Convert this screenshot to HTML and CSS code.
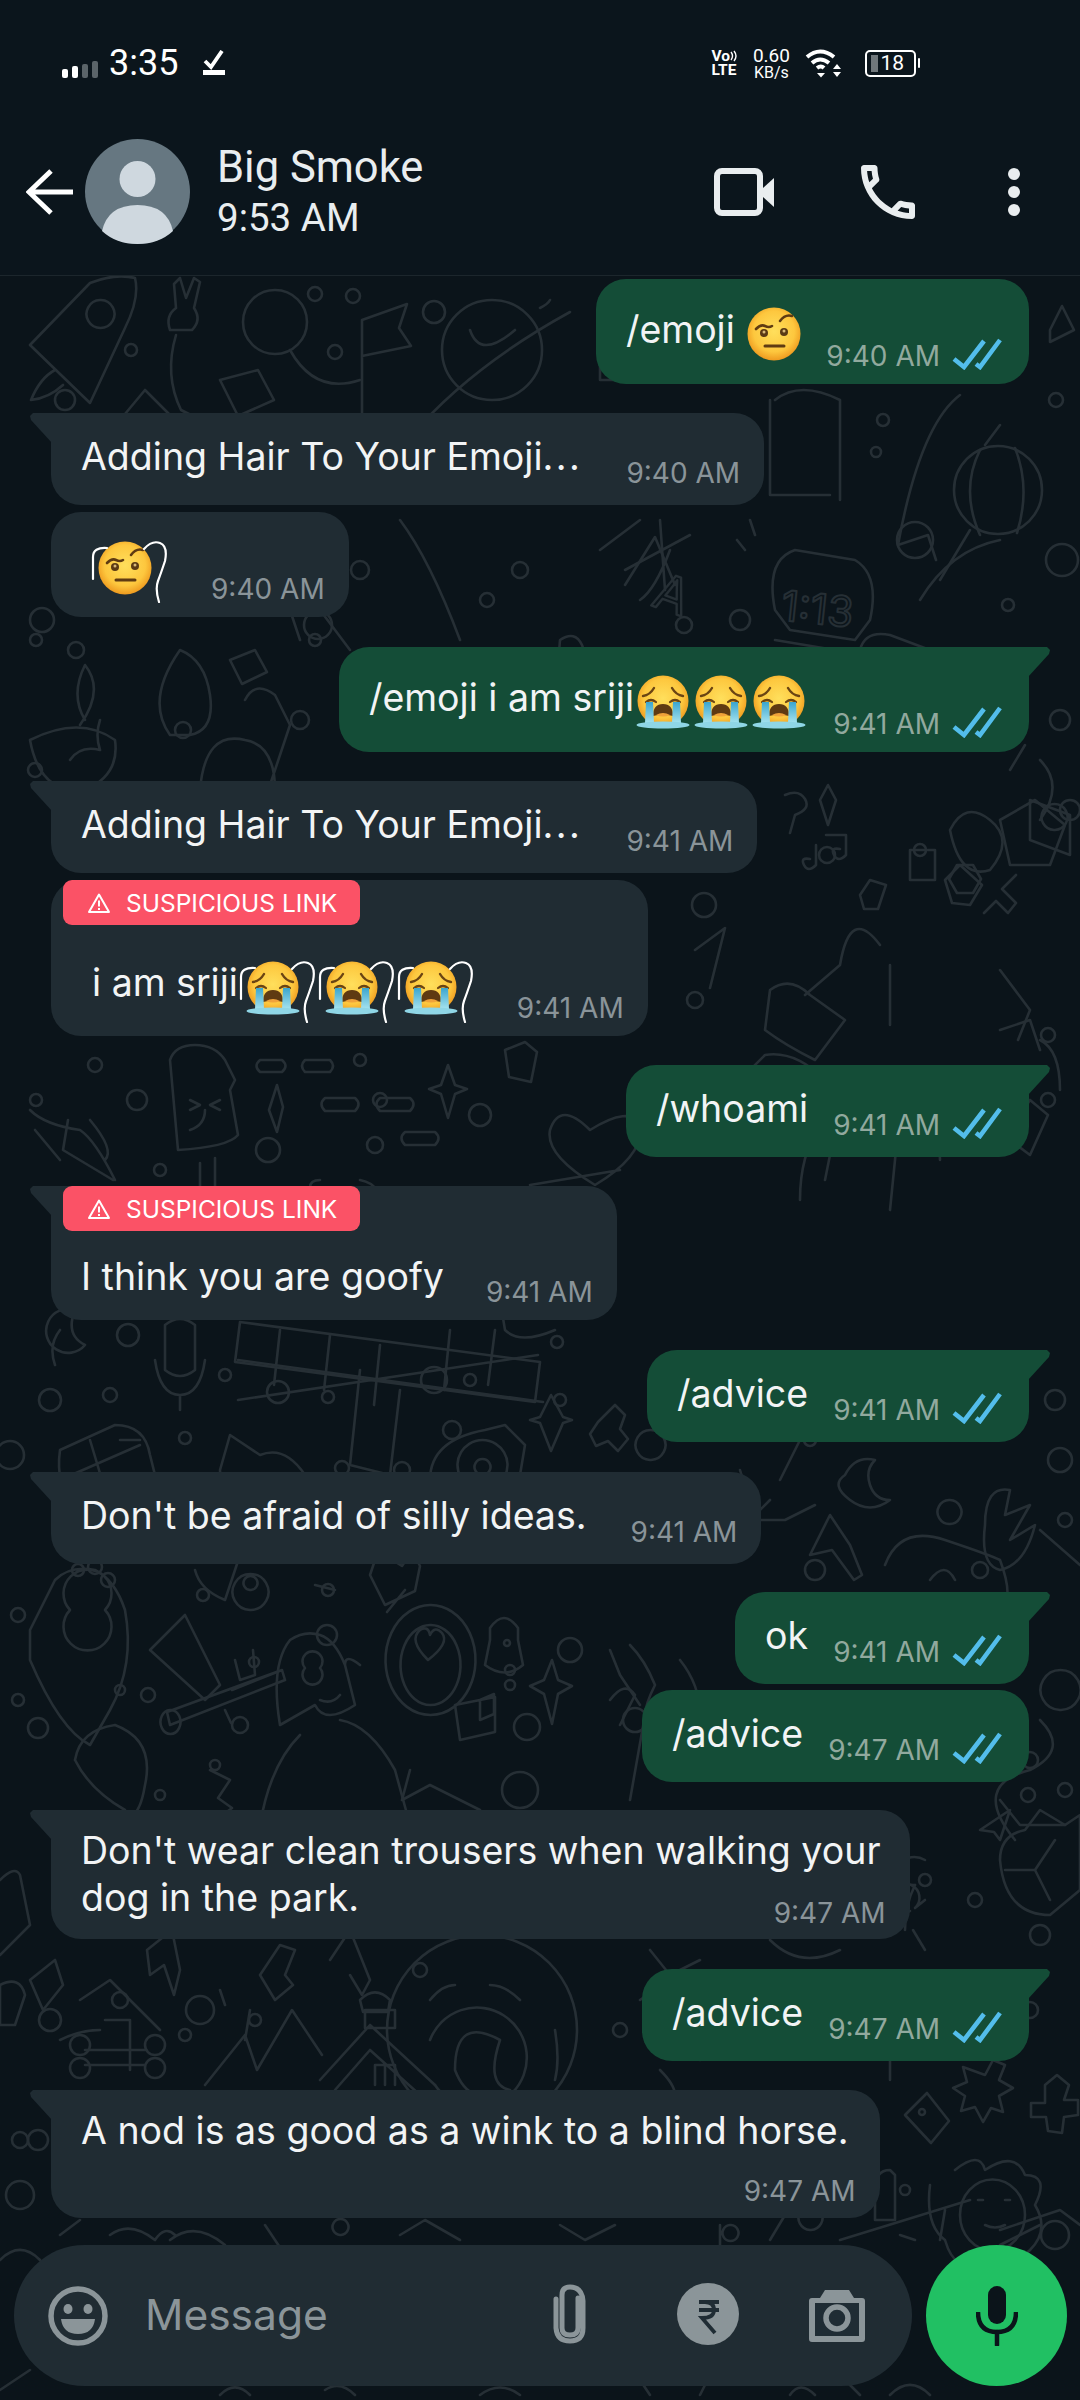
FILE: index.html
```html
<!DOCTYPE html>
<html lang="en">
<head>
<meta charset="utf-8">
<title>Big Smoke</title>
<link rel="stylesheet" href="styles.css">
</head>
<body>
<svg class="defs" width="0" height="0" aria-hidden="true">
  <defs>
    <radialGradient id="face" cx="50%" cy="45%" r="55%">
      <stop offset="0" stop-color="#ffdf5c"/><stop offset=".7" stop-color="#fdc73e"/><stop offset="1" stop-color="#ee9a1f"/>
    </radialGradient>
    <linearGradient id="tear" x1="0" y1="0" x2="0" y2="1">
      <stop offset="0" stop-color="#3aa5cf"/><stop offset="1" stop-color="#a6e3ee"/>
    </linearGradient>
    <symbol id="brow" viewBox="0 0 54 54">
      <circle cx="27" cy="27" r="26.5" fill="url(#face)"/>
      <path d="M9 22q5-5 9-3t7 0" fill="none" stroke="#5f3b12" stroke-width="2.6" stroke-linecap="round"/>
      <path d="M33 14q5-7 12-5" fill="none" stroke="#5f3b12" stroke-width="2.6" stroke-linecap="round"/>
      <circle cx="17" cy="26" r="4" fill="#5b3a14"/><circle cx="17" cy="25" r="1.5" fill="#d8b878"/>
      <circle cx="37" cy="25" r="4" fill="#5b3a14"/><circle cx="37" cy="24" r="1.5" fill="#d8b878"/>
      <path d="M18 39h19" stroke="#5f3b12" stroke-width="3" stroke-linecap="round"/>
    </symbol>
    <symbol id="cry" viewBox="0 0 54 54">
      <circle cx="27" cy="26" r="25.5" fill="url(#face)"/>
      <path d="M7 21q7-1 11-8M47 21q-7-1-11-8" fill="none" stroke="#6b4413" stroke-width="2.4" stroke-linecap="round"/>
      <path d="M10 27q5-4 10 0M34 27q5-4 10 0" fill="none" stroke="#6b4413" stroke-width="2.2" stroke-linecap="round"/>
      <path d="M17 41q0-12 10-12t10 12q-10-3-20 0z" fill="#5f3a12"/>
      <path d="M20 40q7-4 14 0q-7 3-14 0z" fill="#f0a23a"/>
      <path d="M10 27h7l1 21h-9zM37 27h7l1 21h-9z" fill="url(#tear)"/>
      <ellipse cx="27" cy="50" rx="26.5" ry="3.6" fill="#8fd6e6"/>
    </symbol>
    <symbol id="hair" viewBox="0 0 80 66">
      <path d="M3 42V20q0-10 14-9" fill="none" stroke="#fff" stroke-width="2.2" stroke-linecap="round"/>
      <path d="M54 12q8-9 16-6t5 18q-4 12-7 20t1 21" fill="none" stroke="#fff" stroke-width="2.2" stroke-linecap="round"/>
    </symbol>
    <symbol id="ticks" viewBox="0 0 50 32">
      <path d="M2 21l10 8L32 3M24 26l4 3L48 2" fill="none" stroke="#53bdeb" stroke-width="4.6"/>
    </symbol>
    <symbol id="warn" viewBox="0 0 24 22">
      <path d="M12 2.500L22 20H2z" fill="none" stroke="#fff" stroke-width="2" stroke-linejoin="round"/>
      <path d="M12 8.500v6M12 16v2" stroke="#fff" stroke-width="2"/>
    </symbol>
  </defs>
</svg>

<div class="screen">
  <header class="header">
    <div class="status">
      <svg class="bars" viewBox="0 0 36 17"><rect x="0" y="8" width="6" height="9" rx="2" fill="#fff"/><rect x="10" y="5" width="6" height="12" rx="2" fill="#fff"/><rect x="20" y="3" width="6" height="14" rx="2" fill="#5b6469"/><rect x="30" y="0" width="6" height="17" rx="2" fill="#5b6469"/></svg>
      <span class="clock">3:35</span>
      <svg class="dl" viewBox="0 0 22 26"><path d="M2 11l6 6L19 1" fill="none" stroke="#fff" stroke-width="3.800"/><rect x="0" y="20" width="22" height="5" fill="#fff"/></svg>
      <div class="net">
        <div class="volte"><span class="vo">Vo<svg class="arcs" viewBox="0 0 8 12"><path d="M1 2q3 4 0 8M4 1q4 5 0 10" fill="none" stroke="#fff" stroke-width="1.4"/></svg></span><span>LTE</span></div>
        <div class="speed"><span class="sp1">0.60</span><span class="sp2">KB/s</span></div>
        <svg class="wifi" viewBox="0 0 36 30"><path d="M1 9q13-11 27 0M6 15q8-7 17 0M11 20q4-3 7 0" fill="none" stroke="#fff" stroke-width="4"/><path d="M11 25h8l-4 4.500z" fill="#fff"/><path d="M31 16l4 5h-8zM27 24h8l-4 5z" fill="#fff"/></svg>
        <div class="batt"><i class="level"></i><span>18</span></div>
      </div>
    </div>
    <div class="appbar">
      <svg class="back" viewBox="0 0 47 46"><path d="M25 2L3 23l22 21M3 23h44" fill="none" stroke="#fff" stroke-width="5"/></svg>
      <svg class="avatar" viewBox="0 0 105 105"><circle cx="52.500" cy="52.500" r="52.500" fill="#667781"/><ellipse cx="52.500" cy="40" rx="18" ry="18" fill="#cfd8df"/><path d="M17 92q6-26 35.500-26T88 92q-14 13-35.500 13T17 92z" fill="#cfd8df"/></svg>
      <div class="who">
        <div class="name">Big Smoke</div>
        <div class="seen">9:53 AM</div>
      </div>
      <svg class="video" viewBox="0 0 60 48"><rect x="3" y="3" width="43" height="42" rx="5" fill="none" stroke="#e9edef" stroke-width="6"/><path d="M49 20l11-10v29L49 29z" fill="#e9edef"/></svg>
      <svg class="phone" viewBox="0 0 24 24"><path fill="#e9edef" d="M6.540 5c.06.89.21 1.760.45 2.590l-1.200 1.200c-.41-1.200-.67-2.470-.76-3.790h1.510m9.860 12.020c.85.24 1.720.39 2.600.45v1.490c-1.320-.09-2.590-.35-3.800-.75l1.200-1.190M7.500 3H4c-.55 0-1 .45-1 1 0 9.390 7.610 17 17 17 .55 0 1-.45 1-1v-3.490c0-.55-.45-1-1-1-1.240 0-2.450-.2-3.570-.57-.1-.04-.21-.05-.31-.05-.26 0-.51.1-.71.29l-2.200 2.200c-2.830-1.450-5.150-3.760-6.590-6.590l2.200-2.200c.28-.28.36-.67.25-1.020C8.700 6.450 8.500 5.250 8.500 4c0-.55-.45-1-1-1z"/></svg>
      <svg class="dots" viewBox="0 0 16 48"><circle cx="8" cy="6" r="6" fill="#e9edef"/><circle cx="8" cy="24" r="6" fill="#e9edef"/><circle cx="8" cy="42" r="6" fill="#e9edef"/></svg>
    </div>
  </header>

  <main class="chat">
    <svg class="doodles" viewBox="0 276 1080 2124" aria-hidden="true">
      <g fill="none" stroke="#262f35" stroke-width="2.600" stroke-linecap="round" stroke-linejoin="round">
        <path d="M30 345l60-62q25-10 45-5 5 20-10 50l-35 75zM100 300a14 14 0 1 0 1 0zM55 370q-15 8-24 30 18-2 32-15"/>
        <path d="M170 330q-5-14 6-22l-2-24 6-6 6 20 8-20 6 4-6 26q8 12-2 22zM176 335q-12 40 5 75q35 20 60 5"/>
        <circle cx="275" cy="322" r="32"/><path d="M290 350q25 45 70 30"/>
        <circle cx="315" cy="294" r="7"/><circle cx="353" cy="296" r="7"/><circle cx="335" cy="352" r="7"/><circle cx="434" cy="312" r="11"/><circle cx="131" cy="350" r="6"/>
        <path d="M362 420V320l45-16-8 24 12 18-49 10"/>
        <circle cx="492" cy="350" r="50"/><path d="M570 312q-100 55-160 125M550 300q-2 4-10 8M470 330q10 30 45 0"/>
        <path d="M220 380l38-10 16 30-36 16zM120 420l25-30 40 40"/><circle cx="65" cy="400" r="10"/>
        <path d="M1050 330l12-24 12 24 -24 12z"/><path d="M1000 540q-50 10-80 60M960 395q-40 30-62 150l30-10 8 25"/><circle cx="883" cy="420" r="6"/>
        <circle cx="998" cy="490" r="44"/><path d="M980 450q-20 40 0 85M1015 448q16 40 2 85M985 445l15-20M970 530l-30 50"/><circle cx="1056" cy="400" r="7"/>
        <path d="M600 550l40-30M625 585l30-48 20 48M770 400v95h60"/><path d="M640 360h-40v20h40zM775 400q25-20 65 0v100"/>
        <circle cx="876" cy="452" r="5"/><circle cx="915" cy="540" r="18"/><circle cx="1062" cy="560" r="16"/><circle cx="1008" cy="605" r="6"/>
        <path d="M775 610q-10-50 20-60l60 10q25 15 15 60l-15 20-65-10zM775 640l60 10M745 550l-8-10M755 535l-5-15"/>
        <text x="780" y="620" font-family="Inter, sans-serif" font-size="42" transform="rotate(6 780 620)" fill="none" stroke="#262f35" stroke-width="2">1:13</text>
        <text x="650" y="605" font-family="Inter, sans-serif" font-size="50" fill="none" stroke="#262f35" stroke-width="2.400" transform="rotate(20 650 605)">A</text>
        <path d="M625 570l65-35M660 520l5 70M640 600q15-10 30-50"/>
        <path d="M560 640q15-10 22 5t-2 25q-15 8-22-5zM400 520q30 40 60 120M350 650l-45-60M300 640l-20-60"/>
        <circle cx="520" cy="570" r="8"/><circle cx="487" cy="600" r="7"/><circle cx="360" cy="570" r="9"/>
        <circle cx="42" cy="620" r="12"/><circle cx="36" cy="640" r="6"/><circle cx="76" cy="650" r="8"/><circle cx="318" cy="625" r="14"/><circle cx="315" cy="640" r="6"/><circle cx="610" cy="670" r="18"/><circle cx="684" cy="625" r="8"/><circle cx="740" cy="620" r="10"/>
        <path d="M180 650q25 10 30 45t-20 40h-20q-25-35 10-85zM230 660l25-10 12 22-25 12z"/>
        <path d="M100 720q-5 15 0 30q-20-5-30 10M30 740q50-25 85 0q5 35-30 50q-45 5-55-50zM85 720q-15-25 0-55 20 25-5 60"/>
        <circle cx="35" cy="770" r="7"/><circle cx="183" cy="730" r="8"/><circle cx="300" cy="720" r="9"/>
        <path d="M245 700q10-20 30-5l15 30 -20 60M200 790q5-60 45-50 30 5 30 50"/>
        <path d="M860 650q5-20 30-15l40 15-15 45-50-5zM915 680l-10 30M860 720l-40-20"/>
        <path d="M1000 820l35-20 30 25-15 40h-40zM1040 760q25 25 0 60M1010 770l15-25"/>
        <path d="M785 795q14-6 20 4t-10 16l-5 18M826 835h20v20q-8 8-12 0t6-6M816 845v20q-8 8-12 0t6-6M957 865l16 0 8 14-8 14h-16l-8-14zM1016 875l-14 14 14 14-8 10-12-12-12 12M1054 830a13 13 0 1 1 1 0M1030 800l40 15v40l-40-15z"/>
        <path d="M820 800l8-15 8 15 -8 25zM910 850h25v30h-25zM950 830q15-30 40-10t0 50q-30 10-40-40z"/>
        <circle cx="827" cy="855" r="8"/><circle cx="920" cy="850" r="6"/><circle cx="1070" cy="810" r="10"/><circle cx="1060" cy="720" r="10"/>
        <path d="M860 895l10-15 16 5-8 24-14 0zM945 880l15-15 22 20-12 20-18-2zM880 945q-30-40-40 20l-35 30M695 950l30-22 -15 60"/>
        <path d="M770 990q20-15 40 5l35 25-30 40q-30-15-50-30zM890 1025v-60M1000 970l30 40-12 30"/><circle cx="704" cy="905" r="12"/><circle cx="695" cy="1000" r="8"/>
        <path d="M720 1100l45-45q30-5 60 25l45 60M800 1200q0-90 80-120q60 30 60 80M845 1080l-20 100M900 1110l-10 100"/>
        <path d="M1000 1030l30-10 10 30M1040 1040q20 10 20 50M1030 1100q-20 30-20 40l20 15 18-40z"/><circle cx="1048" cy="1035" r="7"/><circle cx="1048" cy="1100" r="7"/>
        <circle cx="95" cy="1065" r="7"/><circle cx="137" cy="1100" r="10"/><circle cx="36" cy="1100" r="6"/>
        <path d="M170 1060q5-15 25-15 20 0 30 15l10 20-5 10 8 45q-10 12-60 15zM200 1163v30q15 10 15-5v-30M190 1130q15-5 15-20M190 1100l10 5-10 5M220 1100l-10 5 10 5"/>
        <path d="M30 1110q15 15 50 20 15 10 35 50M68 1120l-5 30 50 30M90 1120q25 30 15 40M35 1130l25 30"/>
        <path d="M260 1060h22q7 6 0 12h-22q-7-6 0-12zM305 1060h25q6 6 0 12h-25q-6-6 0-12zM325 1098h30q7 6 0 13h-30q-7-7 0-13zM380 1098h30q7 6 0 13h-30q-7-7 0-13zM405 1132h30q7 6 0 13h-30q-7-7 0-13z"/>
        <path d="M277 1085l6 22 -6 25-8-22zM448 1065l7 20 12 4-12 5-7 24-7-24-12-5 12-4z"/><circle cx="360" cy="1060" r="6"/><circle cx="380" cy="1100" r="7"/><circle cx="480" cy="1115" r="11"/><circle cx="375" cy="1145" r="8"/><circle cx="268" cy="1150" r="12"/><circle cx="160" cy="1170" r="6"/>
        <path d="M505 1050l20-8 12 10-6 30-22-5zM590 1130q-30-30-40 0-5 25 45 55 50-30 45-60-10-20-50 5zM620 1170l-90 15"/>
        <path d="M520 1205l-30 25M360 1180q25 5 15 30M320 1180q-20 0 0 30"/>
        <path d="M238 1400l300 -45M238 1360l305 42M280 1330l-6 55M330 1335l-6 55M380 1345l-6 60M450 1330l-6 60M495 1330l-7 55M360 1370l-10 95 40 10 10-85"/>
        <path d="M240 1322l300 40 -5 40-300-40zM60 1330q-12 15-5 35M85 1345a22 22 0 1 1-10-35q-10 25 10 35z"/><circle cx="128" cy="1335" r="11"/>
        <path d="M165 1340v30q15 12 30 0v-45q-15-12-30 0zM155 1360q5 35 25 35t25-35M180 1395v15"/><circle cx="225" cy="1375" r="6"/><circle cx="110" cy="1395" r="7"/><circle cx="50" cy="1400" r="11"/><circle cx="278" cy="1392" r="11"/><circle cx="328" cy="1397" r="6"/>
        <path d="M560 1315a25 25 0 1 1 1 0zM500 1300l5 30q15 15 50 0"/>
        <circle cx="434" cy="1380" r="13"/><circle cx="470" cy="1380" r="6"/><circle cx="557" cy="1342" r="6"/><circle cx="560" cy="1400" r="6"/>
        <path d="M60 1450l55-25q30 0 35 30l10 40-85 20q-20-30-15-65zM60 1480l80-35M90 1440l15 50M120 1440h20"/><circle cx="185" cy="1438" r="6"/><circle cx="10" cy="1455" r="14"/>
        <path d="M220 1470l10-35 30 20q25-10 45 20l15 50h-90q-10-30-10-55zM265 1475l15 10M230 1490l10 20"/>
        <path d="M430 1480q0-40 55-50l20-5 20 20 -10 60h-80zM482 1490a25 25 0 1 1 1 0zM482 1475a8 8 0 1 1 1 0z"/><circle cx="402" cy="1470" r="8"/><circle cx="342" cy="1468" r="7"/><circle cx="452" cy="1430" r="9"/>
        <path d="M551 1395l12 22 9 3-9 3-12 28-11-28-10-3 10-3zM605 1415l10-10 10 10 -5 14 8 10-10 12-10-10-12 5-6-12 8-12z"/>
        <path d="M650 1460a15 15 0 1 1 1 0M740 1470l15 50h30l30-15M770 1500l-15 15M800 1440l-20 40"/>
        <circle cx="1055" cy="1400" r="10"/><circle cx="1060" cy="1460" r="12"/><circle cx="1020" cy="1400" r="7"/><circle cx="815" cy="1570" r="10"/><circle cx="980" cy="1570" r="8"/>
        <path d="M845 1475q10-20 30-15-10 10-5 25t20 15q-20 15-40 0t-5-25zM950 1500a12 12 0 1 1-1 0zM985 1525q0-40 25-35l-5 25 25-10-20 35 25-15q-10 40-35 45-20-5-15-45z"/>
        <path d="M900 1400q15-30 45-5-10-25 30-20"/><path d="M830 1515l20 30 12 30 -8 5-22-30-22 5z"/>
        <path d="M885 1565q15-40 60-25t55 20q15 40 0 50M930 1580q15-20 25 0"/><circle cx="1065" cy="1520" r="7"/><path d="M1040 1530l40 35"/><circle cx="810" cy="1440" r="6"/>
        <path d="M55 1580q15-15 40-10 20 10 30 40 10 55-15 100l-20 35q-30-15-60-85l0-30zM70 1610a24 24 0 1 1 35 0 24 24 0 1 1-35 0z"/>
        <circle cx="78" cy="1570" r="6"/><circle cx="95" cy="1567" r="7"/><circle cx="108" cy="1580" r="7"/><circle cx="18" cy="1615" r="7"/><circle cx="148" cy="1695" r="7"/><circle cx="120" cy="1690" r="5"/><circle cx="18" cy="1700" r="6"/>
        <path d="M150 1650l35-35 35 70-15 15zM180 1620l-5 5M195 1570q5 20 30 30l15-45M250 1610a18 18 0 1 1 1 0M250 1590a7 7 0 1 1 1 0"/>
        <path d="M370 1575l8 -24 24 15 10-15 8 15-5 25-30 14zM405 1590l-18 22M335 1590l-20-5"/><circle cx="203" cy="1595" r="6"/><circle cx="254" cy="1662" r="5"/><circle cx="328" cy="1590" r="6"/><circle cx="327" cy="1635" r="10"/>
        <path d="M290 1640q15-10 30-5t25 30l10 40q-30 20-40 0l-35 20q-10-60 10-85zM305 1668a10 10 0 1 1 15 0 10 10 0 1 1-15 0zM345 1665q0-12 15 0M320 1700q12 5 20-5M300 1735q-30 30-40 90M340 1720q30 5 55 50l15 55"/>
        <path d="M232 1690l50-20M167 1712l115-42 3 10-115 45zM225 1710l6 13M235 1660l5 20 15-5-2-25"/>
        <path d="M430 1605a45 55 0 1 0 1 0zM430 1625a30 40 0 1 0 1 0zM428 1660q-20-20-8-30 8-5 10 5 5-10 12-2 8 10-14 27z"/>
        <path d="M490 1640v-12q14-20 28 0v12l5 25q-18 15-38 0z"/><circle cx="507" cy="1643" r="3"/><circle cx="570" cy="1650" r="12"/>
        <path d="M552 1660l6 20 14 6-14 8-6 30-8-30-14-8 14-6zM455 1705l40-8v35l-35 8zM480 1720l14-6v-20l-14 6z"/><circle cx="527" cy="1727" r="13"/><circle cx="510" cy="1670" r="5"/><circle cx="510" cy="1685" r="5"/>
        <path d="M75 1760q5-30 40-35 40 15 30 60-5 30-15 30M75 1760q15 30 50 50M170 1710a10 12 0 1 0 1 0"/><circle cx="38" cy="1728" r="10"/><circle cx="215" cy="1765" r="5"/><circle cx="160" cy="1795" r="5"/><circle cx="520" cy="1790" r="18"/><circle cx="635" cy="1720" r="12"/><circle cx="240" cy="1725" r="8"/>
        <path d="M210 1770l20 10-12 18 14 10-20 15M410 1770l-8 30 28-15 50 25M610 1700q15-20 25-5l-15 30"/>
        <path d="M630 1645q15 15 25 40 -10 20-10 30l-15 85M610 1650l10 25 20 30"/><path d="M680 1660q20 25 20 55M1040 1720q30 30-10 50-60 15-15 70M1000 1800l20 25 45 0M1060 1710a20 20 0 1 1 1 0"/><circle cx="1030" cy="1760" r="8"/><circle cx="1065" cy="1790" r="7"/>
        <path d="M1000 1860q0-25 25-30l15-20 25 15 15-10v75l-30 25q-45 0-50-55zM1005 1870h30l20-30M1035 1870l15 30"/><path d="M980 1830l30-20-10 30-6-8z"/><circle cx="1028" cy="1795" r="7"/><circle cx="975" cy="1900" r="7"/>
        <path d="M925 1900l-10 8a14 14 0 1 0-5 3M925 1950l-12-20M915 1885q-10 20-10 45"/><circle cx="925" cy="1880" r="6"/>
        <path d="M925 1860a18 14 0 1 0-10 25"/><circle cx="1040" cy="1935" r="10"/>
        <path d="M30 1980l25-20 8 25-20 25zM147 1950l25-20 8 40 -6 25-10-30-14 10zM260 1975l20-30 15 5-10 25 8 10-18 15zM330 1960l20-30 20 50 -8 15-12-20"/><circle cx="420" cy="1970" r="7"/><circle cx="120" cy="2000" r="8"/><circle cx="200" cy="2010" r="14"/>
        <circle cx="482" cy="2030" r="95"/><path d="M430 2000q12-15 25-15M490 1985q15 0 30 15M500 2040q-45-25-45 30 15 40 55 20-25-5-10-50zM555 2030q5 30 0 50"/><path d="M430 2040a50 50 0 1 1 5 45"/>
        <path d="M320 2080l50-55 65 60M335 2090l35-40 50 45M395 2010v18h-30v-18zM360 2000q15-15 30 0l-2 12h-25zM375 2085v-20h20v20M385 2065v20"/>
        <path d="M205 2085l40-50 12 35 35-60 30 45M225 2005l-5 -15M250 2010l-5 30"/>
        <path d="M80 2000l30-20 50 50M60 2040q20-10 40-10M85 2050h60M85 2065l60 0M105 2020h25v50"/><circle cx="155" cy="2045" r="10"/><circle cx="155" cy="2068" r="10"/><circle cx="80" cy="2045" r="10"/><circle cx="80" cy="2068" r="10"/><circle cx="50" cy="2020" r="11"/><circle cx="185" cy="2035" r="6"/><circle cx="255" cy="2020" r="6"/><circle cx="620" cy="2030" r="7"/>
        <path d="M0 1985q20-10 25 10l-10 30H0zM0 1880q15-15 20-5l10 50-30 30"/>
        <path d="M650 1950l20 25 30-15M640 2000q40-30 60 60M860 2000q-40 15-60 55M770 1940q30 30 70 10M660 2070q15 15 15 25M890 2080v-60l110-25 8 40M900 2040l100-20M920 2040v-20M950 2035v-20"/><circle cx="1030" cy="2010" r="8"/>
        <path d="M985 2075l8 -15 12 5-6 15 14 8-14 8 4 16-12-4-8 14-8-15-14 4 4-15-12-8 14-6-4-15z"/>
        <path d="M1045 2085l12-10 12 10-5 15h14v15l-14 2 -2 16-14-2-2-14h-15v-14h14z"/>
        <path d="M905 2115l22-22 22 28-18 22z"/><circle cx="922" cy="2112" r="3"/><circle cx="865" cy="2105" r="7"/><circle cx="830" cy="2105" r="7"/>
        <path d="M960 2215a32 35 0 1 0 65 0 32 35 0 1 0-65 0zM955 2170q25-20 30 0 30-20 40 5 25 0 10 30 15 25-5 45-25 25-45 15-30 10-40-25-20-15-15-55 5-25z"/><path d="M978 2200h5M1005 2200h5M985 2225q10 5 20 0"/><path d="M890 2170q-15 0-15 20v30h20v-45zM900 2235l15 5"/><circle cx="905" cy="2190" r="5"/><circle cx="1055" cy="2235" r="14"/>
        <path d="M1000 2230l60 -20 20 15M840 2240l130-40M1000 2245l40-20M940 2240l5-30"/>
        <circle cx="20" cy="2140" r="8"/><circle cx="20" cy="2195" r="14"/><circle cx="38" cy="2140" r="10"/>
        <path d="M0 2260q20-20 40 0M60 2235l20-15M110 2235q20-15 45 5 10-15 20-5M170 2240q25-20 55 5l-5 20M265 2225l20 30M340 2235a8 8 0 1 1 1 0M400 2235l25-15 35 20M560 2225l25 15 30-15M720 2225v20M730 2225a8 8 0 1 0 1 0M770 2240l15-25M810 2230a12 12 0 1 1 1 0"/>
        <path d="M0 2390l30-20M220 2395q15-15 30 0M325 2390q15-10 30 5M480 2395q20-15 40 0M650 2395l-10-15M700 2395l10-20M790 2395q10-15 25 0M860 2395l-15-15M890 2395q20 -20 40 0"/>
      </g>
    </svg>

    <div class="thread">
      <div class="row out g4"><div class="bubble tall">
        <span class="text">/emoji <svg class="emo lead"><use href="#brow"/></svg></span>
        <span class="meta">9:40 AM <svg class="tk"><use href="#ticks"/></svg></span>
      </div></div>
      <div class="row in g29"><div class="bubble tail">
        <span class="text">Adding Hair To Your Emoji<span class="ell">...</span></span>
        <span class="meta">9:40 AM</span>
      </div></div>
      <div class="row in g7"><div class="bubble tall">
        <span class="text"><svg class="hairy lone"><use href="#brow" x="8" y="4" width="54" height="54"/><use href="#hair"/></svg></span>
        <span class="meta">9:40 AM</span>
      </div></div>
      <div class="row out g30"><div class="bubble tall tail">
        <span class="text">/emoji i am sriji<svg class="emo tight"><use href="#cry"/></svg><svg class="emo tight"><use href="#cry"/></svg><svg class="emo tight"><use href="#cry"/></svg></span>
        <span class="meta">9:41 AM <svg class="tk"><use href="#ticks"/></svg></span>
      </div></div>
      <div class="row in g29"><div class="bubble tail">
        <span class="text">Adding Hair To Your Emoji<span class="ell">...</span></span>
        <span class="meta">9:41 AM</span>
      </div></div>
      <div class="row in g7"><div class="bubble flagged">
        <div class="badge"><svg class="wn"><use href="#warn"/></svg>SUSPICIOUS LINK</div>
        <div class="body wide">
          <span class="text indent">i am sriji<svg class="hairy"><use href="#cry" x="8" y="4" width="54" height="54"/><use href="#hair"/></svg><svg class="hairy"><use href="#cry" x="8" y="4" width="54" height="54"/><use href="#hair"/></svg><svg class="hairy"><use href="#cry" x="8" y="4" width="54" height="54"/><use href="#hair"/></svg></span>
          <span class="meta">9:41 AM</span>
        </div>
      </div></div>
      <div class="row out g29"><div class="bubble tail">
        <span class="text">/whoami</span>
        <span class="meta">9:41 AM <svg class="tk"><use href="#ticks"/></svg></span>
      </div></div>
      <div class="row in g29"><div class="bubble tail flagged">
        <div class="badge"><svg class="wn"><use href="#warn"/></svg>SUSPICIOUS LINK</div>
        <div class="body">
          <span class="text">I think you are goofy</span>
          <span class="meta">9:41 AM</span>
        </div>
      </div></div>
      <div class="row out g30"><div class="bubble tail">
        <span class="text">/advice</span>
        <span class="meta">9:41 AM <svg class="tk"><use href="#ticks"/></svg></span>
      </div></div>
      <div class="row in g30"><div class="bubble tail">
        <span class="text">Don't be afraid of silly ideas.</span>
        <span class="meta">9:41 AM</span>
      </div></div>
      <div class="row out g28"><div class="bubble tail">
        <span class="text">ok</span>
        <span class="meta">9:41 AM <svg class="tk"><use href="#ticks"/></svg></span>
      </div></div>
      <div class="row out g6"><div class="bubble">
        <span class="text">/advice</span>
        <span class="meta">9:47 AM <svg class="tk"><use href="#ticks"/></svg></span>
      </div></div>
      <div class="row in g28"><div class="bubble tail stacked two">
        <div class="text">Don't wear clean trousers when walking your<br>dog in the park.</div>
        <span class="meta">9:47 AM</span>
      </div></div>
      <div class="row out g30"><div class="bubble tail">
        <span class="text">/advice</span>
        <span class="meta">9:47 AM <svg class="tk"><use href="#ticks"/></svg></span>
      </div></div>
      <div class="row in g29"><div class="bubble tail stacked one">
        <div class="text">A nod is as good as a wink to a blind horse.</div>
        <span class="meta">9:47 AM</span>
      </div></div>
    </div>

    <footer class="composer">
      <div class="field">
        <svg class="ico smile" viewBox="0 0 60 60"><circle cx="30" cy="30" r="27" fill="none" stroke="#8b9599" stroke-width="5.500"/><ellipse cx="20" cy="23" rx="4.500" ry="5" fill="#8b9599"/><ellipse cx="40" cy="23" rx="4.500" ry="5" fill="#8b9599"/><path d="M13 33h34q-2 15-17 15T13 33z" fill="#8b9599"/></svg>
        <span class="hint">Message</span>
        <svg class="ico clip" viewBox="0 0 38 62"><path d="M27 16v30q0 7-8 7t-8-7V13q0-8 8-8 12 0 13 14v27q0 13-13 13T5 46V17" fill="none" stroke="#8b9599" stroke-width="5" stroke-linecap="round"/></svg>
        <svg class="ico pay" viewBox="0 0 62 62"><circle cx="31" cy="31" r="31" fill="#8b9599"/><path d="M22 19h20M22 27h20M28 19q9 0 9 8t-12 8l13 15" fill="none" stroke="#1f2c34" stroke-width="3.800"/></svg>
        <svg class="ico cam" viewBox="0 0 60 56"><path d="M18 3h24l5 8h8q3 0 3 3v38q0 3-3 3H5q-3 0-3-3V14q0-3 3-3h8z" fill="#8b9599"/><rect x="8" y="16" width="44" height="33" fill="#1f2c34"/><circle cx="30" cy="31" r="11" fill="none" stroke="#8b9599" stroke-width="5.500"/></svg>
      </div>
      <div class="mic">
        <svg viewBox="0 0 42 60"><rect x="12" y="0" width="18" height="38" rx="9" fill="#0b141a"/><path d="M2 26q0 20 19 20t19-20" fill="none" stroke="#0b141a" stroke-width="4.500"/><path d="M21 46v13" stroke="#0b141a" stroke-width="4.500" stroke-linecap="round"/></svg>
      </div>
    </footer>
  </main>
</div>
</body>
</html>
```

FILE: styles.css
```css
* { box-sizing: border-box; }
html, body { margin: 0; padding: 0; background: #0b141a; }
body { width: 1080px; height: 2400px; overflow: hidden; font-family: Inter, "Noto Sans", sans-serif; color: #e9edef; }
.defs { display: block; height: 0; width: 0; }
.screen { width: 1080px; height: 2400px; display: flex; flex-direction: column; }

/* header */
.header { height: 276px; background: #0b151c; border-bottom: 1px solid #1c262c; flex: none; }
.status { height: 126px; display: flex; align-items: center; padding-left: 62px; color: #fff; }
.bars { width: 36px; height: 17px; margin-top: 13px; }
.clock { font-family: Roboto, sans-serif; font-size: 36px; margin-left: 11px; }
.dl { width: 22px; height: 26px; margin-left: 25px; }
.net { margin-left: 486px; display: flex; align-items: center; }
.volte { display: flex; flex-direction: column; font: 700 15.500px/14px Roboto, sans-serif; width: 28px; }
.vo { display: flex; align-items: center; }
.arcs { width: 8px; height: 12px; }
.speed { display: flex; flex-direction: column; align-items: center; margin-left: 12px; width: 40px; font-family: Roboto, sans-serif; }
.sp1 { font-size: 19px; line-height: 19px; }
.sp2 { font-size: 16px; line-height: 16px; }
.wifi { width: 38px; height: 30px; margin-left: 14px; }
.batt { position: relative; width: 51px; height: 27px; margin-left: 22px; border: 2.500px solid #fff; border-radius: 5px; display: flex; align-items: center; padding-left: 4px; font: 400 21px/1 Roboto, sans-serif; }
.batt::after { content: ""; position: absolute; right: -6px; top: 6px; width: 2px; height: 10px; background: #fff; border-radius: 1px; }
.level { width: 7px; height: 17px; background: #70777b; margin-right: 2px; }

.appbar { height: 131px; display: flex; align-items: center; padding-left: 26px; padding-right: 54px; }
.back { width: 47px; height: 46px; flex: none; }
.avatar { width: 105px; height: 105px; flex: none; margin-left: 12px; }
.who { margin-left: 27px; margin-top: 4px; font-family: Roboto, sans-serif; }
.name { font-size: 43.500px; line-height: 50px; color: #e9edef; margin-top: -2px; }
.seen { font-size: 38.500px; line-height: 50px; color: #e9edef; }
.video { width: 60px; height: 48px; margin-left: auto; }
.phone { width: 72px; height: 72px; margin-left: 78px; }
.dots { width: 24px; height: 48px; margin-left: 78px; }

/* chat */
.chat { position: relative; flex: 1; display: flex; flex-direction: column; min-height: 0; }
.doodles { position: absolute; left: 0; top: 0; width: 1080px; height: 2124px; }
.thread { position: relative; flex: 1; display: flex; flex-direction: column; }
.row { display: flex; }
.row.out { justify-content: flex-end; padding-right: 51px; }
.row.in { padding-left: 51px; }
.g4 { margin-top: 3px; }
.g6 { margin-top: 6px; }
.g7 { margin-top: 7px; }
.g28 { margin-top: 28px; }
.g29 { margin-top: 29px; }
.g30 { margin-top: 30px; }

.bubble { position: relative; display: flex; border-radius: 30px; padding: 18px 24px 17px 30px; }
.in .bubble { background: #202c33; }
.out .bubble { background: #144d37; padding-right: 27px; }
.text { font-size: 37.500px; line-height: 52px; height: 52px; color: #f2f4f5; margin-bottom: 5px; white-space: nowrap; display: block; }
.ell { letter-spacing: 2.500px; }
.meta { align-self: flex-end; font-size: 28px; line-height: 30px; white-space: nowrap; display: flex; align-items: center; }
.in .meta { color: #8a9499; margin-left: 44px; }
.out .meta { color: #91a99e; margin-left: 25px; }
.tk { width: 50px; height: 32px; margin-left: 12px; margin-top: -4px; }

.bubble.tall { padding-top: 25px; padding-bottom: 13px; }
.tall .text { margin-bottom: 15px; }

.tail.bubble { border-top-left-radius: 0; }
.out .tail.bubble { border-top-left-radius: 30px; border-top-right-radius: 0; }
.tail::before { content: ""; position: absolute; top: 0; width: 22px; height: 30px; }
.in .tail::before { left: -21px; background: #202c33; clip-path: polygon(22px 30px, 1px 7px, 0 3px, 3px 0, 22px 0); }
.out .tail::before { right: -21px; background: #144d37; clip-path: polygon(0 30px, 21px 7px, 22px 3px, 19px 0, 0 0); }

.emo { width: 54px; height: 54px; vertical-align: -6px; margin-block: -12px; }
.emo.lead { margin-left: 2px; }
.emo.tight { margin-left: 2px; margin-right: 2px; }
.hairy { width: 80px; height: 66px; vertical-align: -7px; margin-block: -20px; margin-right: -1px; }
.hairy.lone { margin-left: 9px; margin-right: -3px; }

.flagged.bubble { flex-direction: column; align-items: flex-start; padding: 0 24px 13px 30px; }
.badge { display: flex; align-items: center; width: 297px; height: 45px; margin-left: -18px; background: #fb5266; border-radius: 9px; color: #fff; font-size: 24.500px; padding-left: 24px; white-space: nowrap; }
.wn { width: 24px; height: 22px; margin-right: 15px; flex: none; }
.body { display: flex; margin-top: 20px; }
.body .text { margin-bottom: 4px; }
.body .meta { margin-left: 42px; }
.body.wide { margin-top: 32px; }
.body.wide .text { margin-bottom: 14px; }
.indent { margin-left: 11px; }

.stacked.bubble { flex-direction: column; padding-top: 17px; }
.stacked .text { line-height: 47px; height: auto; margin: 0; }
.stacked .meta { align-self: flex-end; margin-left: 0; }
.two.bubble { padding-bottom: 11px; }
.two .text { margin-right: 5px; }
.two .meta { margin-top: -23px; }
.one.bubble { padding-bottom: 12px; }
.one .text { margin-right: 7px; }
.one .meta { margin-top: 22px; }

/* composer */
.composer { position: absolute; left: 14px; top: 1969px; display: flex; gap: 14px; }
.field { width: 898px; height: 141px; border-radius: 70.500px; background: #202c33; display: flex; align-items: center; padding-left: 34px; }
.ico { flex: none; }
.smile { width: 60px; height: 60px; }
.hint { margin-left: 37px; font-size: 42.500px; color: #8b9599; margin-top: -2px; }
.clip { width: 38px; height: 62px; margin-left: 223px; margin-top: -6px; }
.pay { width: 62px; height: 62px; margin-left: 88px; margin-top: -4px; }
.cam { width: 60px; height: 56px; margin-left: 68px; margin-top: -2px; }
.mic { width: 141px; height: 141px; border-radius: 50%; background: #21c063; display: flex; align-items: center; justify-content: center; }
.mic svg { width: 42px; height: 60px; }
```
